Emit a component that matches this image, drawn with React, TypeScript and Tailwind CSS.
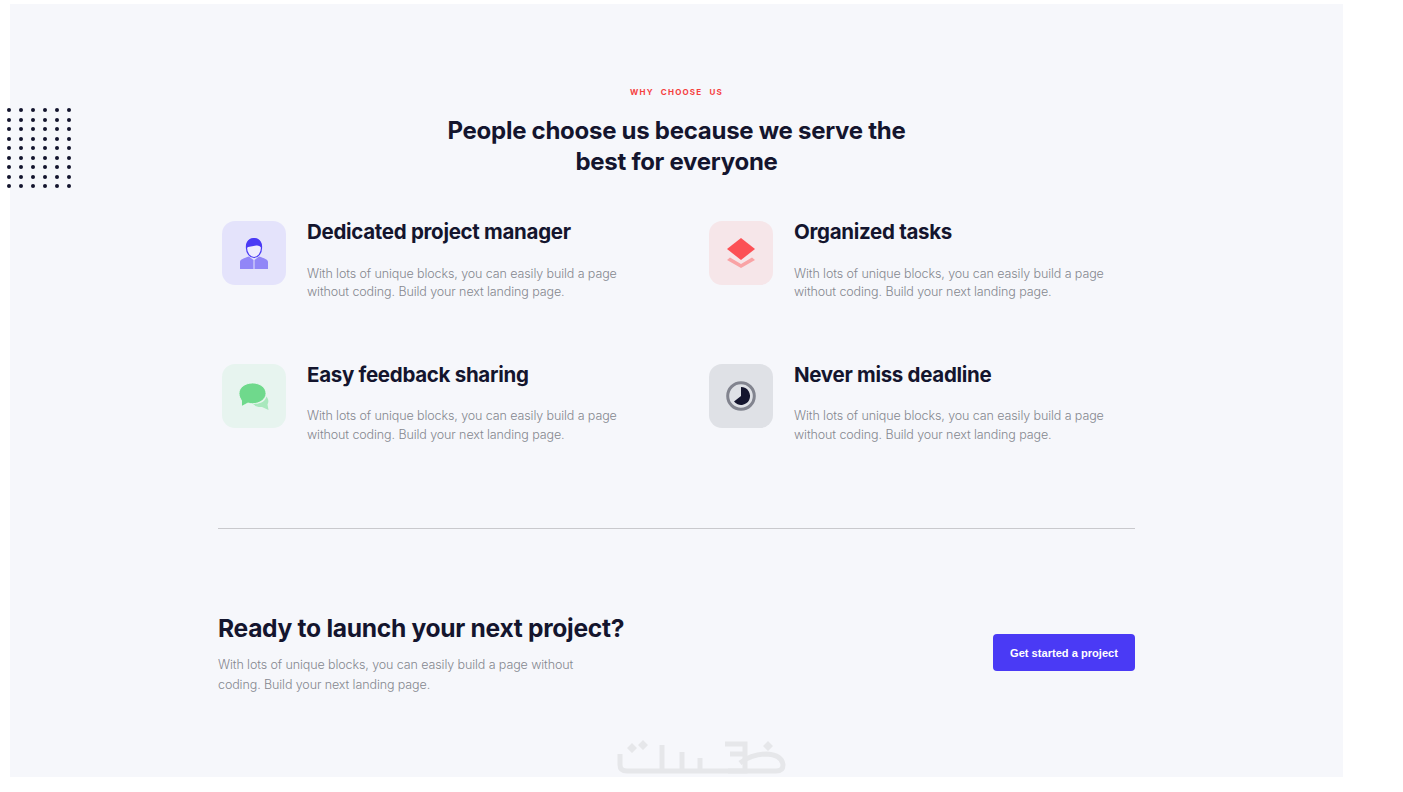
const Desc = () => (
  <p className="mt-[20.500px] w-[330px] text-[12.500px] leading-[18.500px] font-light text-[#85878f] tracking-[-0.1px]">
    With lots of unique blocks, you can easily build a page without coding. Build your next landing page.
  </p>
);

const IconBox = ({ bg, children }: { bg: string; children: React.ReactNode }) => (
  <div className={`flex h-[64px] w-[64px] shrink-0 items-center justify-center rounded-[13px] ${bg}`}>{children}</div>
);

const Feature = ({ title, bg, icon }: { title: string; bg: string; icon: React.ReactNode }) => (
  <div className="flex gap-[21px]">
    <IconBox bg={bg}>{icon}</IconBox>
    <div className="-mt-[1px]">
      <h3 className="text-[20.500px] leading-[24px] font-bold text-[#14152e] tracking-[-0.3px]">{title}</h3>
      <Desc />
    </div>
  </div>
);

const Person = () => (
  <svg width="28" height="32" viewBox="0 0 28 32">
    <path d="M0 32V25C0 22.500 4 21 9 19.500L13.500 23V32Z M14.500 23L19 19.500C24 21 28 22.500 28 25V32H14.500Z" fill="#9186f7" />
    <ellipse cx="14" cy="11" rx="7.500" ry="9.500" fill="#eeecfd" stroke="#4a3af5" strokeWidth="1.200" />
    <path d="M6 11.500C5 5 9 1 14 1S23 5 22 11.500C20.500 9 18 8 16 8.500C13 9.500 8.500 9 6 11.500Z" fill="#4a3af5" />
  </svg>
);

const Layers = () => (
  <svg width="28" height="30" viewBox="0 0 28 30">
    <path d="M0 22L3 19.500L14 26L25 19.500L28 22L14 30Z" fill="#f9a3a5" />
    <path d="M14 0L28 11L14 22L0 11Z" fill="#fc5055" />
  </svg>
);

const Chat = () => (
  <svg width="30" height="28" viewBox="0 0 30 28">
    <path d="M13 21C20 23 26 20 27.500 14.500C29.500 17 30 20 28.500 22.500L29.500 28L23 25C19 25.500 15.500 24 13 21Z" fill="#a9e8bd" />
    <path d="M13.500 1C6 1 0 5.500 0 11.500C0 14.500 1.500 17 2.500 18.500L2.500 24.500L9 21C10.500 21.500 12 21.700 13.500 21.700C21 21.700 27 17 27 11.500C27 5.500 21 1 13.500 1Z" fill="#6fd98c" stroke="#f0f9f5" strokeWidth="0.800" />
  </svg>
);

const Clock = () => (
  <svg width="30" height="30" viewBox="0 0 30 30">
    <circle cx="15" cy="15" r="13.300" fill="none" stroke="#82848f" strokeWidth="3" />
    <path d="M15 6A9 9 0 1 1 8 20.600L15 15Z" fill="#14152e" />
  </svg>
);

const dots = Array.from({ length: 54 });

export default function App() {
  return (
    <div className="h-[792px] w-[1403px] overflow-hidden bg-white pl-[10px] pt-[4px] font-['Inter',sans-serif]">
      <div className="relative h-[773px] w-[1333px] overflow-visible bg-[#f6f7fb] pt-[83px]">
        <div className="absolute left-[-3.300px] top-[104.300px] grid grid-cols-[repeat(6,4px)] gap-x-[8px] gap-y-[5.500px]">
          {dots.map((_, i) => (
            <span key={i} className="h-[4px] w-[4px] rounded-full bg-[#14152e]" />
          ))}
        </div>

        <p className="text-center text-[8px] leading-[10px] font-bold tracking-[1.200px] text-[#f53f3f] [word-spacing:4px]">WHY CHOOSE US</p>
        <h2 className="mx-auto mt-[18px] w-[480px] text-center text-[24px] leading-[31px] font-bold text-[#14152e] tracking-[-0.27px]">
          People choose us because we serve the best for everyone
        </h2>

        <div className="mx-auto mt-[44px] w-[917px]">
          <div className="grid grid-cols-[487px_1fr] gap-y-[62px] pl-[4px]">
            <Feature title="Dedicated project manager" bg="bg-[#e4e3fb]" icon={<Person />} />
            <Feature title="Organized tasks" bg="bg-[#f6e6e9]" icon={<Layers />} />
            <Feature title="Easy feedback sharing" bg="bg-[#e7f4ef]" icon={<Chat />} />
            <Feature title="Never miss deadline" bg="bg-[#dfe1e6]" icon={<Clock />} />
          </div>

          <div className="mt-[84px] h-px bg-[#c9c9cd]" />

          <div className="mt-[85px] flex items-start justify-between">
            <div>
              <h2 className="text-[24.600px] leading-[28px] font-bold text-[#14152e] tracking-[-0.3px]">Ready to launch your next project?</h2>
              <p className="mt-[13px] w-[380px] text-[12.500px] leading-[19.500px] font-light text-[#85878f] tracking-[-0.1px]">
                With lots of unique blocks, you can easily build a page without coding. Build your next landing page.
              </p>
            </div>
            <button className="mt-[20px] h-[37px] w-[142px] rounded-[4px] bg-[#4a3af5] pt-px text-center text-[11.100px] font-bold text-white font-['Liberation_Sans',sans-serif]">
              Get started a project
            </button>
          </div>
        </div>

        <svg className="absolute left-[590px] top-[726px]" width="200" height="47" viewBox="0 0 200 47" fill="none" stroke="#e6e7ea" strokeWidth="5">
          <path d="M20 24V35Q20 41 27 41H176Q183 41 183 35Q182 25 167 24Q152 24 140 33" />
          <path d="M62 15V41" />
          <path d="M82 22V41" />
          <path d="M100 28V41" />
          <path d="M125 14H145V41H128" />
          <path d="M130 24H145" />
          <path d="M32 13l5 5l-5 5l-5-5Z M43 10l5 5l-5 5l-5-5Z M168 11l5 5l-5 5l-5-5Z" fill="#e6e7ea" stroke="none" />
        </svg>
      </div>
    </div>
  );
}
